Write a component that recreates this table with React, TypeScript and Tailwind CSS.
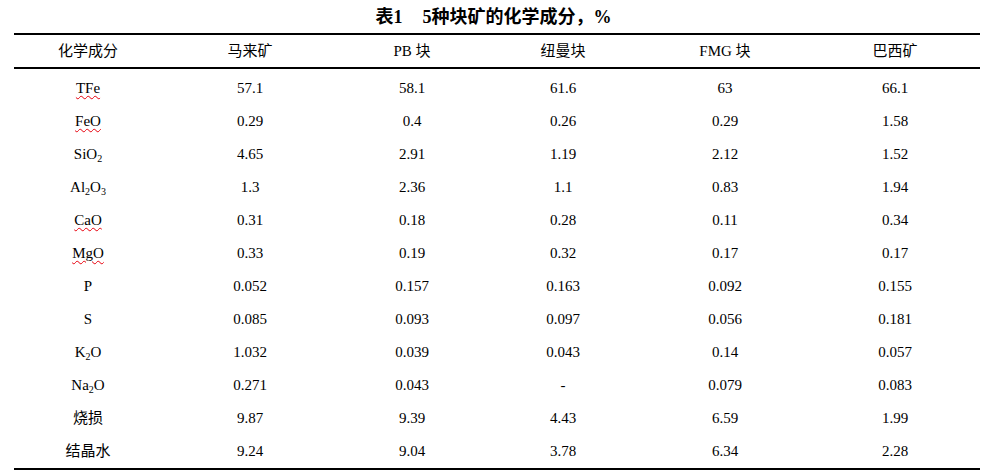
import React from "react"

const cols = ["化学成分", "马来矿", "PB 块", "纽曼块", "FMG 块", "巴西矿"]

const Squiggle = ({ children }: { children: React.ReactNode }) => (
  <span className="underline decoration-wavy decoration-red-600 decoration-1 underline-offset-[2px]">
    {children}
  </span>
)

const Sub = ({ children }: { children: React.ReactNode }) => (
  <span className="text-[10px] relative top-[3px]">{children}</span>
)

const rows: [React.ReactNode, string, string, string, string, string][] = [
  [<Squiggle>TFe</Squiggle>, "57.1", "58.1", "61.6", "63", "66.1"],
  [<Squiggle>FeO</Squiggle>, "0.29", "0.4", "0.26", "0.29", "1.58"],
  [<>SiO<Sub>2</Sub></>, "4.65", "2.91", "1.19", "2.12", "1.52"],
  [<>Al<Sub>2</Sub>O<Sub>3</Sub></>, "1.3", "2.36", "1.1", "0.83", "1.94"],
  [<Squiggle>CaO</Squiggle>, "0.31", "0.18", "0.28", "0.11", "0.34"],
  [<Squiggle>MgO</Squiggle>, "0.33", "0.19", "0.32", "0.17", "0.17"],
  ["P", "0.052", "0.157", "0.163", "0.092", "0.155"],
  ["S", "0.085", "0.093", "0.097", "0.056", "0.181"],
  [<>K<Sub>2</Sub>O</>, "1.032", "0.039", "0.043", "0.14", "0.057"],
  [<>Na<Sub>2</Sub>O</>, "0.271", "0.043", "-", "0.079", "0.083"],
  ["烧损", "9.87", "9.39", "4.43", "6.59", "1.99"],
  ["结晶水", "9.24", "9.04", "3.78", "6.34", "2.28"],
]

const grid = "grid grid-cols-[148px_176px_148px_154px_170px_170px]"

export default function App() {
  return (
    <div
      className="w-[987px] h-[476px] bg-white text-black px-[14px] overflow-hidden"
      style={{ fontFamily: '"Liberation Serif", "Noto Sans CJK SC", serif' }}
    >
      {/* title */}
      <div className="h-[33px] flex items-center justify-center pt-[2px] text-[18px] font-bold">
        <span>表1</span>
        <span className="ml-[20px]">5种块矿的化学成分，%</span>
      </div>

      <div className="w-[966px] border-t-2 border-b-2 border-black">
        {/* header */}
        <div className={`${grid} h-[34px] items-center text-[15px] border-b-2 border-black`}>
          {cols.map((c, i) => (
            <div key={i} className="text-center">{c}</div>
          ))}
        </div>

        {/* body */}
        <div className="pt-[3px]">
          {rows.map((r, i) => (
            <div key={i} className={`${grid} h-[33px] items-center text-[15px]`}>
              {r.map((cell, j) => (
                <div key={j} className="text-center">{cell}</div>
              ))}
            </div>
          ))}
        </div>
      </div>
    </div>
  )
}
